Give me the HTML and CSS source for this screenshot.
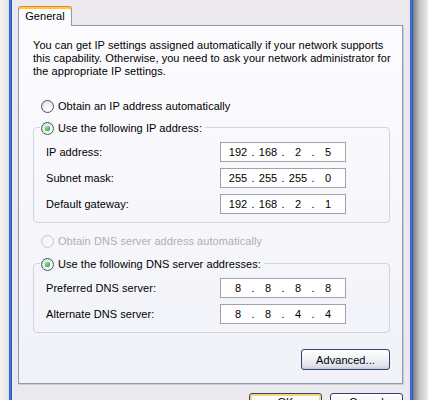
FILE: index.html
```html
<!DOCTYPE html>
<html>
<head>
<meta charset="utf-8">
<link rel="stylesheet" href="styles.css">
</head>
<body>
<div class="desk">
  <div class="edge-left"></div>
  <div class="frame"></div>
  <div class="win">
    <div class="tabs">
      <div class="tab">General</div>
      <div class="tab-fill"></div>
    </div>
    <div class="panel">
      <p class="intro">You can get IP settings assigned automatically if your network supports<br>this capability. Otherwise, you need to ask your network administrator for<br>the appropriate IP settings.</p>

      <div class="opt first"><span class="radio"></span><span>Obtain an IP address automatically</span></div>

      <fieldset class="group">
        <legend><span class="legend-in"><span class="radio on"></span><span>Use the following IP address:</span></span></legend>
        <div class="rows">
          <div class="row"><span class="lbl">IP address:</span>
            <div class="ip"><span>192</span><i>.</i><span>168</span><i>.</i><span>2</span><i>.</i><span>5</span></div></div>
          <div class="row"><span class="lbl">Subnet mask:</span>
            <div class="ip"><span>255</span><i>.</i><span>255</span><i>.</i><span>255</span><i>.</i><span>0</span></div></div>
          <div class="row"><span class="lbl">Default gateway:</span>
            <div class="ip"><span>192</span><i>.</i><span>168</span><i>.</i><span>2</span><i>.</i><span>1</span></div></div>
        </div>
      </fieldset>

      <div class="opt dns disabled"><span class="radio dis"></span><span>Obtain DNS server address automatically</span></div>

      <fieldset class="group">
        <legend><span class="legend-in"><span class="radio on"></span><span>Use the following DNS server addresses:</span></span></legend>
        <div class="rows">
          <div class="row"><span class="lbl">Preferred DNS server:</span>
            <div class="ip"><span>8</span><i>.</i><span>8</span><i>.</i><span>8</span><i>.</i><span>8</span></div></div>
          <div class="row"><span class="lbl">Alternate DNS server:</span>
            <div class="ip"><span>8</span><i>.</i><span>8</span><i>.</i><span>4</span><i>.</i><span>4</span></div></div>
        </div>
      </fieldset>

      <div class="adv-row"><button class="btn adv">Advanced...</button></div>
    </div>
    <div class="footer">
      <button class="btn ok">OK</button>
      <button class="btn">Cancel</button>
    </div>
  </div>
  <div class="frame"></div>
  <div class="edge-right"></div>
</div>
</body>
</html>
```

FILE: styles.css
```css
* { box-sizing: border-box; }
html, body { margin: 0; padding: 0; }
body {
  width: 428px;
  height: 400px;
  overflow: hidden;
  font-family: "Liberation Sans", Arial, sans-serif;
  font-size: 11px;
  line-height: 13px;
  letter-spacing: 0.06px;
  color: #000;
  background: #ececec;
}
.desk { display: flex; height: 400px; overflow: hidden; }
.edge-left { width: 9px; flex: none; background: linear-gradient(to right, #f4f4f4, #e2e2e2); }
.frame { width: 3px; flex: none; background: linear-gradient(to right, #2a58c6, #4677de 50%, #2048b4); }
.edge-right { flex: 1; background: linear-gradient(to right, #7e7e7e, #c6c6c6 45%, #ededed); }

.win {
  width: 398px;
  flex: none;
  background: #ebe9ed;
  padding: 6px 7px 0 6px;
}

.tabs { display: flex; height: 20px; }
.tab {
  width: 54px;
  height: 20px;
  text-align: center;
  padding-top: 3px;
  background: #fcfcfe;
  border: 1px solid #919bab;
  border-bottom: none;
  border-top: 1px solid #e68b2c;
  border-radius: 3px 3px 0 0;
  box-shadow: inset 0 2px 0 #ffc83c;
}
.tab-fill { flex: 1; border-bottom: 1px solid #919bab; }

.panel {
  border: 1px solid #919bab;
  border-top: none;
  box-shadow: 1px 1px 0 #c9cdd8;
  background: linear-gradient(#fcfcfe, #f1f2f8);
  padding: 13px 12px 13px 14px;
}
.intro { margin: 0; white-space: nowrap; }

.opt { display: flex; align-items: center; gap: 4px; height: 13px; padding-left: 8px; }
.opt.first { margin-top: 22px; margin-bottom: 8px; }
.opt.dns { margin-top: 12px; margin-bottom: 9px; }
.opt.disabled { color: #b0aeb4; }

.radio {
  width: 13px;
  height: 13px;
  flex: none;
  border-radius: 50%;
  border: 1px solid #3e5776;
  background: radial-gradient(circle at 65% 70%, #ffffff 0, #f4f4f2 35%, #d9d8d2 100%);
  display: inline-flex;
  align-items: center;
  justify-content: center;
}
.radio.on::after {
  content: "";
  width: 5px;
  height: 5px;
  border-radius: 50%;
  background: radial-gradient(circle at 40% 35%, #9ae79a, #22a022 75%);
}
.radio.dis { border-color: #c8c7cc; background: #f6f6f8; }

.group {
  margin: 0;
  border: 1px solid #d3d3da;
  border-radius: 4px;
  padding: 8px 0 8px 12px;
  min-width: 0;
}
.group legend { margin-left: -6px; padding: 0 3px 0 1px; height: 13px; white-space: nowrap; }
.legend-in { display: inline-flex; align-items: center; gap: 4px; height: 13px; }

.rows { display: flex; flex-direction: column; gap: 6px; }
.row { display: flex; align-items: center; height: 20px; }
.lbl { width: 174px; flex: none; white-space: nowrap; }
.ip {
  width: 126px;
  height: 20px;
  border: 1px solid #a2a2a6;
  background: #fff;
  display: grid;
  grid-template-columns: 22px 8px 22px 8px 22px 8px 22px;
  padding-left: 6px;
  align-items: center;
  text-align: center;
}
.ip i { font-style: normal; }

.adv-row { display: flex; justify-content: flex-end; margin-top: 16px; }
.btn {
  font-family: "Liberation Sans", Arial, sans-serif;
  font-size: 11px;
  letter-spacing: 0.06px;
  color: #000;
  height: 21px;
  padding: 0;
  border: 1px solid #2f4470;
  border-radius: 3px;
  background: linear-gradient(#ffffff, #f3f4f7 40%, #dde1ea 85%, #c3cad9);
}
.adv { width: 89px; }

.footer { display: flex; justify-content: flex-end; gap: 8px; margin-top: 9px; }
.footer .btn { width: 73px; height: 23px; padding-bottom: 6px; }
.btn.ok { box-shadow: inset 0 0 0 2px #f7d679; }
```
